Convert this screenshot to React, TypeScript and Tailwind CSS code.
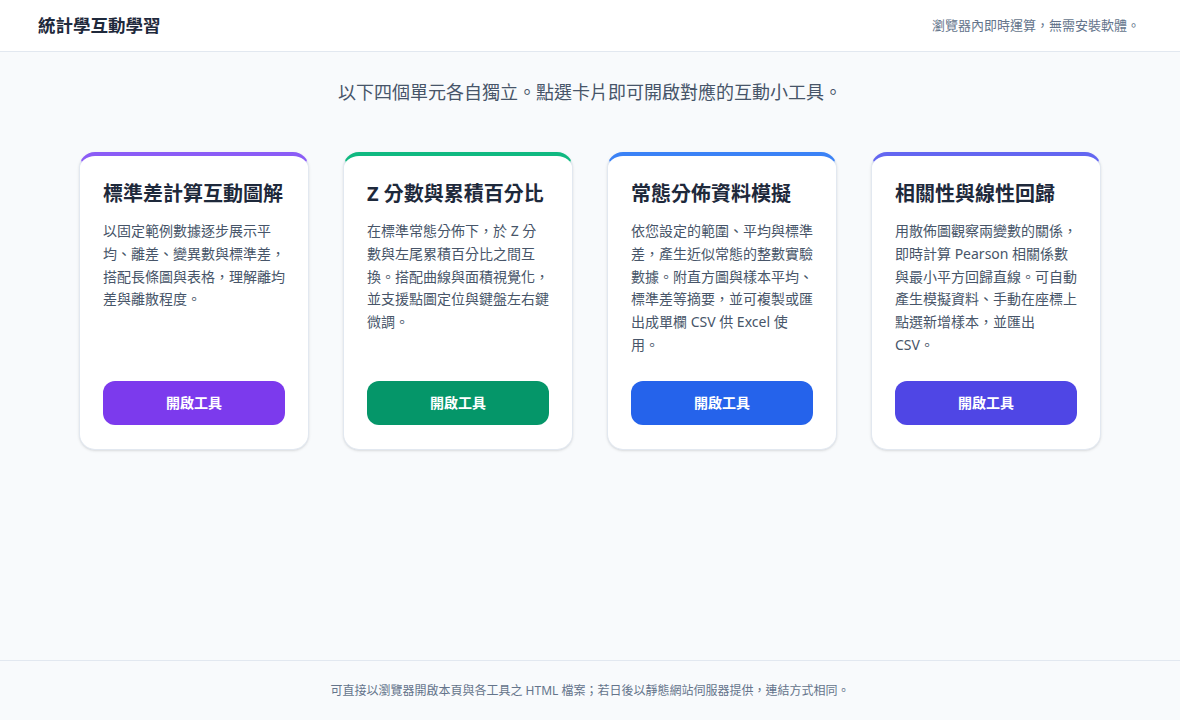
import React from 'react';

const tools = [
  {
    title: '標準差計算互動圖解',
    desc: '以固定範例數據逐步展示平均、離差、變異數與標準差，搭配長條圖與表格，理解離均差與離散程度。',
    top: 'border-t-[#8b5cf6]',
    btn: 'bg-[#7c3aed] hover:bg-[#6d28d9]',
  },
  {
    title: 'Z 分數與累積百分比',
    desc: '在標準常態分佈下，於 Z 分數與左尾累積百分比之間互換。搭配曲線與面積視覺化，並支援點圖定位與鍵盤左右鍵微調。',
    top: 'border-t-[#10b981]',
    btn: 'bg-[#059669] hover:bg-[#047857]',
  },
  {
    title: '常態分佈資料模擬',
    desc: '依您設定的範圍、平均與標準差，產生近似常態的整數實驗數據。附直方圖與樣本平均、標準差等摘要，並可複製或匯出成單欄 CSV 供 Excel 使用。',
    top: 'border-t-[#3b82f6]',
    btn: 'bg-[#2563eb] hover:bg-[#1d4ed8]',
  },
  {
    title: '相關性與線性回歸',
    desc: '用散佈圖觀察兩變數的關係，即時計算 Pearson 相關係數與最小平方回歸直線。可自動產生模擬資料、手動在座標上點選新增樣本，並匯出 CSV。',
    top: 'border-t-[#6366f1]',
    btn: 'bg-[#4f46e5] hover:bg-[#4338ca]',
  },
];

const App = () => {
  return (
    <div className="min-h-screen flex flex-col bg-[#f8fafc] text-[#1e293b] font-['Noto_Sans','Noto_Sans_CJK_TC',sans-serif]">
      <header className="h-[52px] bg-white border-b border-[#e2e8f0] flex items-center justify-between pl-[38px] pr-10">
        <h1 className="text-[17.5px] font-bold text-[#1e293b]">統計學互動學習</h1>
        <p className="text-[13px] text-[#64748b]">瀏覽器內即時運算，無需安裝軟體。</p>
      </header>

      <main className="flex-1">
        <p className="text-center text-lg text-[#475569] pt-[26px]">
          以下四個單元各自獨立。點選卡片即可開啟對應的互動小工具。
        </p>

        <div className="mx-auto mt-[46px] w-[1022px] grid grid-cols-4 gap-[34px]">
          {tools.map((t) => (
            <div
              key={t.title}
              className={`bg-white rounded-2xl border border-[#e2e8f0] border-t-4 ${t.top} shadow-sm px-[23px] pt-6 pb-6 flex flex-col`}
            >
              <h2 className="text-xl font-bold leading-7 text-[#1e293b]">{t.title}</h2>
              <p className="mt-3 flex-1 text-sm leading-relaxed text-[#475569]">{t.desc}</p>
              <a
                href="#"
                className={`mt-6 h-11 rounded-xl ${t.btn} text-white text-sm font-bold flex items-center justify-center`}
              >
                開啟工具
              </a>
            </div>
          ))}
        </div>
      </main>

      <footer className="h-[60px] border-t border-[#e2e8f0] flex items-center justify-center">
        <p className="text-xs text-[#64748b]">
          可直接以瀏覽器開啟本頁與各工具之 HTML 檔案；若日後以靜態網站伺服器提供，連結方式相同。
        </p>
      </footer>
    </div>
  );
};

export default App;
